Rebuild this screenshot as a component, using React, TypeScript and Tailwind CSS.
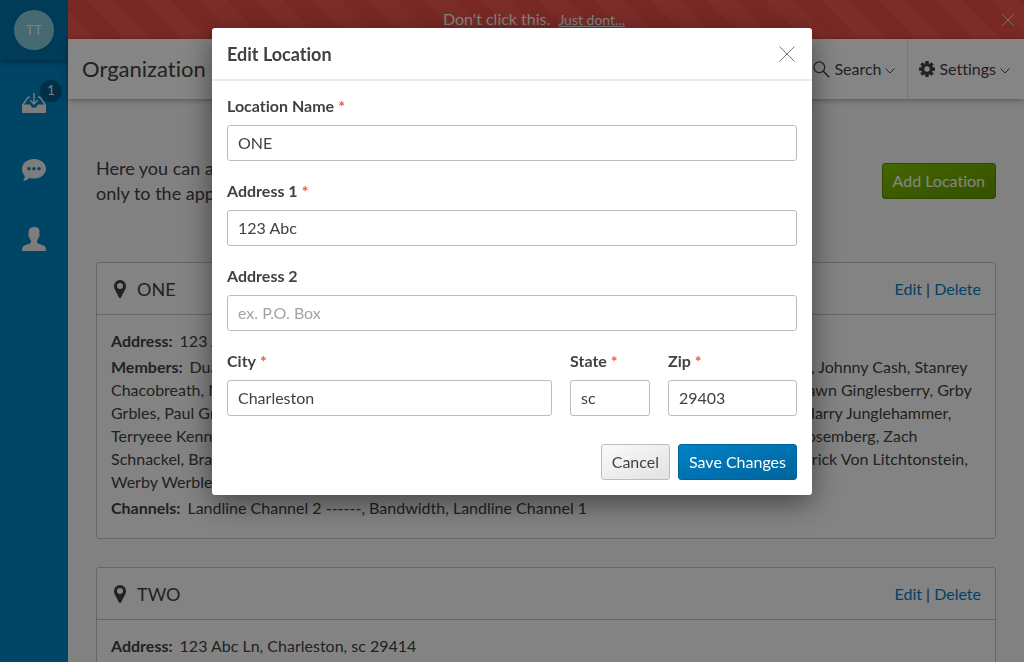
import React from "react";

type Location = {
  name: string;
  address: string;
  members: string;
  channels: string;
};

const locations: Location[] = [
  {
    name: "ONE",
    address: "123 Abc Ln, Charleston, sc 29403",
    members:
      "Duane Allman, Robert Flacke, Peter Frampton, Merle Haggard, Waylon Jones, Sam Cooke, Johnny Cash, Stanrey Chacobreath, Nate Dogg, Emmylou Harris, Loretta Lynn, Dwight Yoakam, Patsy Cline, Chet Atkin, Shawn Ginglesberry, Grby Grbles, Paul Green, Stevie Nicks, Gordon Lightfoot, Bonnie Raitt, Townes Van Zandt, Guy Clarkson, Harry Junglehammer, Terryeee Kennedy, George Strait, Al Green, Randy Travis, Tammy Wynette, Kris Kristoffers, Ronald Rosemberg, Zach Schnackel, Brad Paisley, Alan Jackson, Ray Charles, Charley Pride, Glen Campbell, Roger Miller, Frederick Von Litchtonstein, Werby Werbleson",
    channels: "Landline Channel 2 ------, Bandwidth, Landline Channel 1",
  },
  {
    name: "TWO",
    address: "123 Abc Ln, Charleston, sc 29414",
    members: "",
    channels: "",
  },
];

function CrossIcon({ className }: { className: string }) {
  return (
    <svg viewBox="0 0 16 16" className={className} fill="none" stroke="currentColor" aria-hidden="true">
      <path d="M0.5 0.5l15 15M15.5 0.5l-15 15" />
    </svg>
  );
}

function ChevronIcon() {
  return (
    <svg viewBox="0 0 10 6" className="mt-1 h-1.5 w-2.5" fill="none" stroke="currentColor" aria-hidden="true">
      <path d="M0.5 0.5L5 5l4.5-4.5" />
    </svg>
  );
}

function SearchIcon() {
  return (
    <svg viewBox="0 0 17 17" className="size-[17px]" fill="none" stroke="currentColor" aria-hidden="true">
      <circle cx="6.3" cy="6.3" r="5.4" strokeWidth="1.2" />
      <path d="M10.3 10.3l6 6" strokeWidth="1.6" />
    </svg>
  );
}

function GearIcon() {
  return (
    <svg viewBox="0 0 16 16" className="size-4" aria-hidden="true">
      <g fill="currentColor">
        {[0, 45, 90, 135].map((angle) => (
          <rect key={angle} x="6.3" y="0" width="3.4" height="16" rx="0.4" transform={`rotate(${angle} 8 8)`} />
        ))}
        <circle cx="8" cy="8" r="6" />
      </g>
      <circle cx="8" cy="8" r="2.7" fill="#fff" />
    </svg>
  );
}

function PinIcon() {
  return (
    <svg viewBox="0 0 12 18" className="h-[18px] w-3" fill="currentColor" aria-hidden="true">
      <path
        fillRule="evenodd"
        d="M6 0a6 6 0 0 0-6 6c0 4 3.2 6.6 4.600 11 .4 1.300 2.400 1.300 2.800 0C8.800 12.600 12 10 12 6a6 6 0 0 0-6-6zm0 3.100a3 3 0 1 1 0 6 3 3 0 0 1 0-6z"
      />
    </svg>
  );
}

function InboxIcon() {
  return (
    <svg viewBox="0 0 24 20" className="h-5 w-6" aria-hidden="true">
      <path d="M0 11.500h7.500c.8 0 1 .4 1.300 1.200.5 1.400 1.700 2.100 3.200 2.100s2.700-.7 3.200-2.100c.3-.8.500-1.200 1.300-1.200H24V19a1 1 0 0 1-1 1H1a1 1 0 0 1-1-1z" fill="currentColor" />
      <path d="M0.700 12L6.200 4.200H8M23.300 12l-5.500-7.800H16" fill="none" stroke="currentColor" strokeWidth="1.400" />
      <path d="M12 0v10.500M8.300 7.200L12 10.900l3.700-3.700" fill="none" stroke="currentColor" strokeWidth="1.400" />
    </svg>
  );
}

function ChatIcon() {
  return (
    <svg viewBox="0 0 24 22" className="h-[22px] w-6" fill="currentColor" aria-hidden="true">
      <path
        fillRule="evenodd"
        d="M12 0c6.700 0 12 4.300 12 9.800s-5.300 9.800-12 9.800c-1.600 0-3-.2-4.400-.6C5.800 20.500 3.500 21.800 1 22c.9-1.300 1.700-3 1.800-5C1 15.200 0 12.600 0 9.800 0 4.300 5.300 0 12 0zM7 8.100a1.700 1.700 0 1 0 0 3.400 1.700 1.700 0 0 0 0-3.400zm5 0a1.700 1.700 0 1 0 0 3.400 1.700 1.700 0 0 0 0-3.400zm5 0a1.700 1.700 0 1 0 0 3.400 1.700 1.700 0 0 0 0-3.400z"
      />
    </svg>
  );
}

function PersonIcon() {
  return (
    <svg viewBox="0 0 24 24" className="size-6" fill="currentColor" aria-hidden="true">
      <path d="M12.500 0c2.800 0 5 1.400 5 4.400 0 .8-.2 1.600-.3 2.200.8.2.7 2.900-.4 3.300-.3 1.500-.9 2.600-1.700 3.500-.2 2 .1 2.900 1.600 3.400l4.400 1.500c2 .7 2.900 2 2.900 5.700H0c0-3.700.9-5 2.900-5.700l4.400-1.500c1.500-.5 1.800-1.400 1.600-3.400-.8-.9-1.400-2-1.700-3.500-1.100-.4-1.200-3.100-.4-3.300C6.500 5.500 6.600 3.600 7.200 2.400 8 .8 9.800 0 12.500 0z" />
    </svg>
  );
}

function Sidebar() {
  return (
    <nav className="flex w-[68px] shrink-0 flex-col bg-[#0082c4] text-[#f0f0f0]" aria-label="Primary">
      <div className="flex h-[60px] items-center justify-center bg-[#0071aa] shadow-[0_1px_6px_rgba(0,0,0,0.5)]">
        <a href="#profile" className="flex size-10 items-center justify-center rounded-full bg-[#84ccdb] text-sm">
          TT
        </a>
      </div>
      <div className="flex flex-col items-center gap-[46px] pt-[33px]">
        <a href="#inbox" className="relative" aria-label="Inbox, 1 new">
          <InboxIcon />
          <span className="absolute -top-[13px] left-[18px] flex size-[22px] items-center justify-center rounded-full bg-[#005a87] text-[13px]">
            1
          </span>
        </a>
        <a href="#messages" aria-label="Messages">
          <ChatIcon />
        </a>
        <a href="#contacts" aria-label="Contacts">
          <PersonIcon />
        </a>
      </div>
    </nav>
  );
}

function LocationCard({ location }: { location: Location }) {
  const details = [
    ["Address:", location.address],
    ["Members:", location.members],
    ["Channels:", location.channels],
  ].filter(([, value]) => value);

  return (
    <section className="rounded-[3px] border border-[#c4c4c4] bg-[#fcfcfc]">
      <header className="flex h-[52px] items-center border-b border-[#c4c4c4] px-[17px]">
        <PinIcon />
        <h2 className="ml-[11px] text-lg">{location.name}</h2>
        <div className="-mr-[3px] ml-auto">
          <a href="#edit" className="text-[#0082c4]">Edit</a> | <a href="#delete" className="text-[#0082c4]">Delete</a>
        </div>
      </header>
      <dl className="flex flex-col gap-[3px] px-3.5 pt-3.5 pb-[19px] leading-[23px]">
        {details.map(([term, value]) => (
          <div key={term}>
            <dt className="mr-[7px] inline font-bold">{term}</dt>
            <dd className="inline">{value}</dd>
          </div>
        ))}
      </dl>
    </section>
  );
}

function Field({
  id,
  label,
  value,
  placeholder,
  required,
  className,
}: {
  id: string;
  label: string;
  value?: string;
  placeholder?: string;
  required?: boolean;
  className?: string;
}) {
  return (
    <div className={className}>
      <label htmlFor={id} className="block h-[31px] font-bold leading-[23px]">
        {label}
        {required && <span className="ml-1 text-[#f4533f]">*</span>}
      </label>
      <input
        id={id}
        type="text"
        defaultValue={value}
        placeholder={placeholder}
        className="block h-9 w-full rounded-[3px] border border-[#bdbdbd] bg-white px-2.5 pb-0.5 outline-none placeholder:text-[#a3a3a3]"
      />
    </div>
  );
}

function EditLocationDialog() {
  return (
    <div className="fixed inset-0 z-10 flex items-start justify-center bg-black/48 pt-7">
      <form
        role="dialog"
        aria-modal="true"
        aria-labelledby="dialog-title"
        className="w-full max-w-[600px] rounded-[3px] bg-white shadow-[0_8px_30px_rgba(0,0,0,0.5)]"
      >
        <header className="flex h-[53px] items-center justify-between border-b-2 border-[#eaeaea] px-[15px]">
          <h2 id="dialog-title" className="text-lg font-bold">Edit Location</h2>
          <button type="button" aria-label="Close" className="mr-0.5 text-[#777]">
            <CrossIcon className="size-4" />
          </button>
        </header>
        <div className="flex flex-col gap-[18px] px-[15px] pt-[13px]">
          <Field id="name" label="Location Name" value="ONE" required />
          <Field id="address1" label="Address 1" value="123 Abc" required />
          <Field id="address2" label="Address 2" placeholder="ex. P.O. Box" />
          <div className="flex gap-[18px]">
            <Field id="city" label="City" value="Charleston" required className="flex-1" />
            <Field id="state" label="State" value="sc" required className="w-20" />
            <Field id="zip" label="Zip" value="29403" required className="w-[129px]" />
          </div>
        </div>
        <footer className="flex justify-end gap-2 px-[15px] pt-7 pb-[15px]">
          <button
            type="button"
            className="h-9 rounded-[3px] border border-[#bdbdbd] bg-linear-to-br from-[#fafafa] to-[#e2e2e2] px-2.5"
          >
            Cancel
          </button>
          <button
            type="submit"
            className="h-9 rounded-[3px] border border-[#00649b] bg-linear-to-br from-[#0082c8] to-[#00649b] px-2.5 text-white"
          >
            Save Changes
          </button>
        </footer>
      </form>
    </div>
  );
}

export default function App() {
  return (
    <div className="flex h-screen overflow-hidden bg-[#f7f7f7] font-['Lato',sans-serif] text-base text-[#414141] [font-variant-ligatures:no-common-ligatures]">
      <Sidebar />
      <div className="flex min-w-0 flex-1 flex-col">
        <div className="flex h-[39px] shrink-0 items-center bg-[repeating-linear-gradient(45deg,#f0564c_0,#f0564c_20px,#e94f45_20px,#e94f45_40px)] px-2.5 text-white">
          <p className="flex-1 pr-3 pb-0.5 text-center">
            Don't click this. <a href="#dont" className="ml-1 text-sm underline">Just dont...</a>
          </p>
          <button type="button" aria-label="Dismiss">
            <CrossIcon className="size-3" />
          </button>
        </div>
        <header className="relative flex h-[60px] shrink-0 items-center bg-white pl-3.5 shadow-[0_1px_6px_rgba(0,0,0,0.35)]">
          <h1 className="flex-1 pb-0.5 text-[22px]">Organization Locations</h1>
          <button type="button" className="flex h-full items-center gap-1 border-r border-[#e0e0e0] px-3">
            <SearchIcon /> Search <ChevronIcon />
          </button>
          <button type="button" className="flex h-full items-center gap-1 pr-3.5 pl-[11px]">
            <GearIcon /> Settings <ChevronIcon />
          </button>
        </header>
        <main className="flex flex-col gap-7 px-7 pt-[57px]">
          <div className="flex h-[78px] items-start justify-between gap-20">
            <p className="max-w-[600px] text-lg leading-[25px]">
              Here you can add and edit your locations. Changes apply
              <br />
              only to the app and its channels.
            </p>
            <button
              type="button"
              className="mt-[7px] h-9 shrink-0 rounded-[3px] border border-[#5a8c00] bg-linear-to-br from-[#85c400] to-[#649a00] px-2.5 text-white"
            >
              Add Location
            </button>
          </div>
          {locations.map((location) => (
            <LocationCard key={location.name} location={location} />
          ))}
        </main>
      </div>
      <EditLocationDialog />
    </div>
  );
}
